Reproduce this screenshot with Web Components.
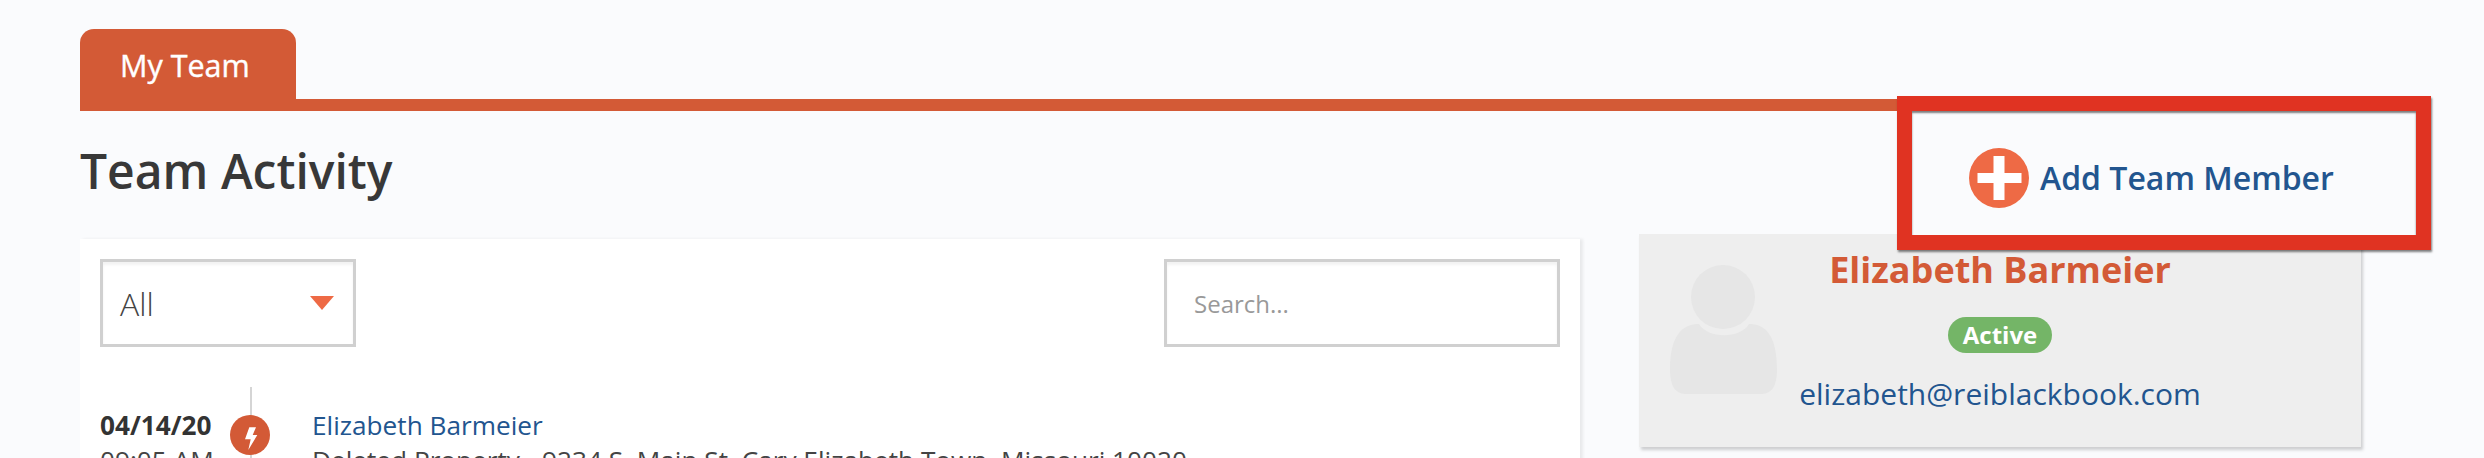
<!DOCTYPE html>
<html>
<head>
<meta charset="utf-8">
<style>
    html, body { margin: 0; height: 100%; overflow: hidden; }
    body { background: #fafbfd; font-family: "Open Sans", sans-serif; }
</style>
</head>
<body>
<team-page></team-page>

<script>
// simple tab bar with the long orange rule under it
class TabBar extends HTMLElement {
    constructor() {
        super();
        this.attachShadow({ mode: 'open' }).innerHTML = `
            <style>
                :host { display: block; height: 82px; position: relative; }
                .tab {
                    width: 216px; height: 82px; box-sizing: border-box;
                    background: #d35a36; color: #fff;
                    border-radius: 14px 14px 0 0;
                    font-size: 30.5px; line-height: 73px; padding-left: 40px;
                    -webkit-text-stroke: 0.4px #fff;
                }
                .rule { position: absolute; left: 0; right: 0; bottom: 0; height: 12px; background: #d35a36; }
            </style>
            <div class="rule"></div>
            <div class="tab"><slot></slot></div>
        `;
    }
}

class FilterSelect extends HTMLElement {
    constructor() {
        super();
        this.attachShadow({ mode: 'open' }).innerHTML = `
            <style>
                :host {
                    display: flex; align-items: center; justify-content: space-between;
                    width: 256px; height: 88px; box-sizing: border-box;
                    border: 3px solid #d0d0d0; padding: 0 19px 0 17px;
                    font-size: 32px; font-weight: 300; color: #444;
                    box-shadow: inset 0 3px 3px rgba(0,0,0,.05);
                }
                .caret { width: 0; height: 0; border: 12px solid transparent; border-top: 14px solid #ee6a45; border-bottom: 0; }
            </style>
            <slot></slot>
            <span class="caret"></span>
        `;
    }
}

class SearchBox extends HTMLElement {
    constructor() {
        super();
        this.attachShadow({ mode: 'open' }).innerHTML = `
            <style>
                :host {
                    display: flex; align-items: center;
                    width: 396px; height: 88px; box-sizing: border-box;
                    border: 3px solid #d0d0d0; padding: 0 27px;
                    font-size: 24px; color: #999;
                    box-shadow: inset 0 3px 3px rgba(0,0,0,.05);
                }
            </style>
            <slot></slot>
        `;
    }
}

class ActivityRow extends HTMLElement {
    constructor() {
        super();
        this.attachShadow({ mode: 'open' }).innerHTML = `
            <style>
                :host { display: grid; grid-template-columns: 130px 40px 1fr; font-size: 26.2px; line-height: 35px; color: #444; }
                .when { white-space: nowrap; }
                .when b { display: block; font-weight: 700; color: #333; }
                .mark { position: relative; width: 40px; height: 72px; }
                .mark::before { content: ""; position: absolute; left: 20px; top: -21px; bottom: 0; width: 2px; background: #d5d5d5; }
                svg { position: relative; display: block; margin-top: 7px; }
                .what { padding-left: 42px; white-space: nowrap; }
                .what a { display: block; color: #22558f; }
            </style>
            <div class="when"><b>${this.getAttribute('date')}</b>${this.getAttribute('time')}</div>
            <div class="mark">
                <svg width="40" height="40" viewBox="0 0 40 40">
                    <circle cx="20" cy="20" r="20" fill="#d35a36"/>
                    <path d="M19.3 12.3 L26 12.3 L22.7 20 L27.3 20 L18.3 35 L20.7 24.3 L15 24.3 Z" fill="#fff"/>
                </svg>
            </div>
            <div class="what"><a>${this.getAttribute('name')}</a><slot></slot></div>
        `;
    }
}

class ActivityPanel extends HTMLElement {
    constructor() {
        super();
        this.attachShadow({ mode: 'open' }).innerHTML = `
            <style>
                :host {
                    display: block; width: 1500px; box-sizing: border-box;
                    background: #fff; padding: 20px 20px 0;
                    box-shadow: 3px 0 3px rgba(0,0,0,.07);
                }
                .filters { display: flex; justify-content: space-between; margin-bottom: 61px; }
            </style>
            <div class="filters">
                <filter-select>All</filter-select>
                <search-box>Search...</search-box>
            </div>
            <activity-row date="04/14/20" time="09:05 AM" name="Elizabeth Barmeier">Deleted Property - 9234 S. Main St. Cary Elizabeth Town, Missouri 10020</activity-row>
        `;
    }
}

class MemberCard extends HTMLElement {
    constructor() {
        super();
        this.attachShadow({ mode: 'open' }).innerHTML = `
            <style>
                :host {
                    display: flex; width: 722px; height: 213px; box-sizing: border-box;
                    background: #eee; box-shadow: 2px 3px 3px rgba(0,0,0,.18);
                    padding: 15px 0 0 31px;
                }
                svg { flex: none; display: block; margin-top: 16px; }
                .info { width: 400px; margin-left: 23px; display: flex; flex-direction: column; align-items: center; text-align: center; }
                .name { font-size: 36px; line-height: 42px; font-weight: 700; color: #d35a36; }
                .badge {
                    margin-top: 26px; height: 36px; line-height: 35px; width: 104px; border-radius: 18px;
                    background: #74b567; color: #fff; font-size: 24px; font-weight: 700;
                }
                .mail { margin-top: 20px; font-size: 30px; line-height: 42px; color: #22558f; }
            </style>
            <svg width="107" height="130" viewBox="0 0 107 130">
                <ellipse cx="53" cy="32" rx="32" ry="32" fill="#e6e6e6"/>
                <path d="M29 59 C38 74 70 74 79 59 C94 59 107 68 107 105 C107 120 102 129 92 129 L15 129 C5 129 0 120 0 105 C0 68 14 59 29 59 Z" fill="#e6e6e6"/>
            </svg>
            <div class="info">
                <div class="name"><slot name="name"></slot></div>
                <div class="badge"><slot name="status"></slot></div>
                <div class="mail"><slot name="mail"></slot></div>
            </div>
        `;
    }
}

// the red box from the annotation, sits over the page
class AddButton extends HTMLElement {
    constructor() {
        super();
        this.attachShadow({ mode: 'open' }).innerHTML = `
            <style>
                :host {
                    position: absolute; left: 1897px; top: 96px;
                    width: 534px; height: 154px; box-sizing: border-box;
                    display: flex; align-items: center; justify-content: flex-start;
                    background: #fafbfd; border: 15.5px solid #e03322;
                    padding: 10px 0 0 57px;
                    box-shadow: 1px 2px 2px rgba(0,0,0,.5), inset 0 2px 2px rgba(0,0,0,.5);
                }
                svg { flex: none; margin-right: 11px; }
                span { font-size: 32px; font-weight: 600; color: #22558f; white-space: nowrap; margin-bottom: 2px; }
            </style>
            <svg width="60" height="60" viewBox="0 0 60 60">
                <circle cx="30" cy="30" r="30" fill="#ee6a45"/>
                <path d="M24.5 8h11v17h17v10h-17v17h-11v-17h-16v-10h16z" fill="#fff"/>
            </svg>
            <span><slot></slot></span>
        `;
    }
}

class TeamPage extends HTMLElement {
    constructor() {
        super();
        this.attachShadow({ mode: 'open' }).innerHTML = `
            <style>
                :host { display: block; padding: 29px 0 0 80px; }
                tab-bar { width: 1830px; }
                h1 { margin: 27px 0 0; font-size: 48px; line-height: 66px; font-weight: 600; color: #383838; }
                .cols { display: flex; align-items: flex-start; margin-top: 35px; gap: 59px; }
                member-card { margin-top: -5px; }
            </style>
            <tab-bar>My Team</tab-bar>
            <h1>Team Activity</h1>
            <div class="cols">
                <activity-panel></activity-panel>
                <member-card>
                    <span slot="name">Elizabeth Barmeier</span>
                    <span slot="status">Active</span>
                    <span slot="mail">elizabeth@reiblackbook.com</span>
                </member-card>
            </div>
            <add-button>Add Team Member</add-button>
        `;
    }
}

customElements.define('tab-bar', TabBar);
customElements.define('filter-select', FilterSelect);
customElements.define('search-box', SearchBox);
customElements.define('activity-row', ActivityRow);
customElements.define('activity-panel', ActivityPanel);
customElements.define('member-card', MemberCard);
customElements.define('add-button', AddButton);
customElements.define('team-page', TeamPage);
</script>
</body>
</html>
